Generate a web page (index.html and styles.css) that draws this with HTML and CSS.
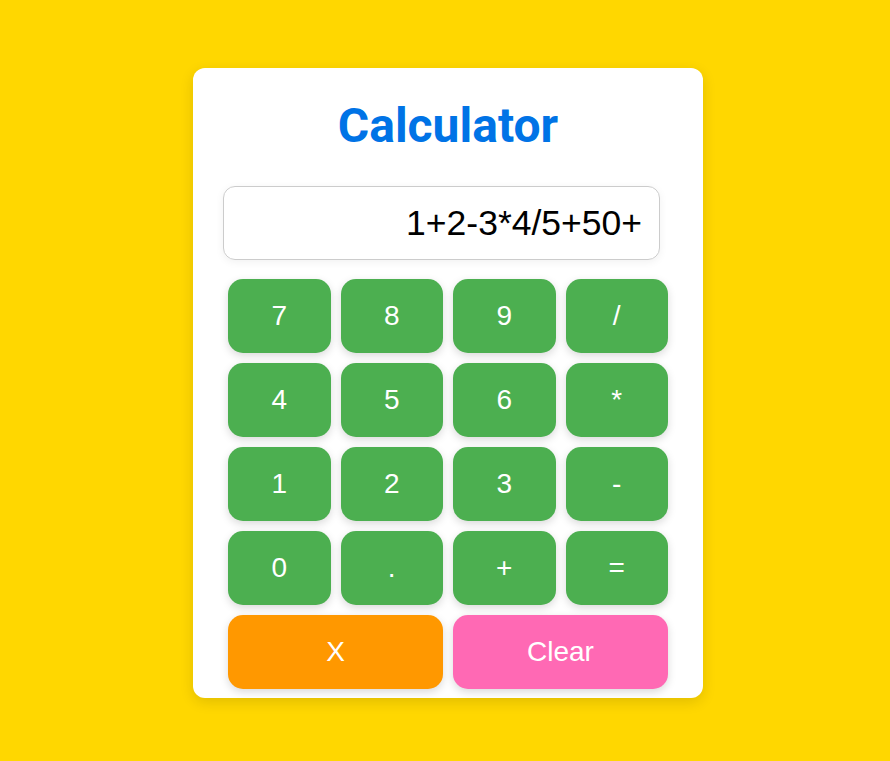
FILE: index.html
```html
<!DOCTYPE html>
<html>
<head>
<meta charset="utf-8">
<link rel="stylesheet" href="styles.css">
</head>
<body>
<div class="calculator">
  <h1 class="title">Calculator</h1>
  <div class="display">1+2-3*4/5+50+</div>
  <div class="keys">
    <button class="key">7</button>
    <button class="key">8</button>
    <button class="key">9</button>
    <button class="key">/</button>
    <button class="key">4</button>
    <button class="key">5</button>
    <button class="key">6</button>
    <button class="key">*</button>
    <button class="key">1</button>
    <button class="key">2</button>
    <button class="key">3</button>
    <button class="key">-</button>
    <button class="key">0</button>
    <button class="key">.</button>
    <button class="key">+</button>
    <button class="key">=</button>
    <button class="key key-back">X</button>
    <button class="key key-clear">Clear</button>
  </div>
</div>
</body>
</html>
```
FILE: styles.css
```css
html, body {
  margin: 0;
  padding: 0;
}
body {
  background: #ffd700;
  min-height: 761px;
  display: flex;
  justify-content: center;
  align-items: flex-start;
  padding-left: 6px;
  box-sizing: border-box;
  font-family: "Liberation Sans", Arial, sans-serif;
}
.calculator {
  margin-top: 68px;
  width: 510px;
  box-sizing: border-box;
  background: #fff;
  border-radius: 12px;
  padding: 30px 30px 4px 30px;
  box-shadow: 0 4px 14px rgba(0, 0, 0, 0.12);
}
.title {
  margin: 0 0 32px 0;
  text-align: center;
  font-family: Roboto, "Liberation Sans", sans-serif;
  font-weight: 700;
  font-size: 48px;
  line-height: 56px;
  color: #0073e6;
}
.display {
  width: 437px;
  height: 74px;
  box-sizing: border-box;
  border: 1px solid #ccc;
  border-radius: 12px;
  padding: 0 17px;
  display: flex;
  align-items: center;
  justify-content: flex-end;
  font-size: 35.5px;
  color: #000;
  box-shadow: 0 2px 8px rgba(0, 0, 0, 0.06);
  margin-bottom: 14px;
}
.keys {
  display: grid;
  grid-template-columns: repeat(4, 1fr);
}
.key {
  margin: 5px;
  height: 74px;
  border: none;
  border-radius: 15px;
  background: #4caf50;
  color: #fff;
  font-family: "Liberation Sans", Arial, sans-serif;
  font-size: 28px;
  box-shadow: 0 3px 8px rgba(0, 0, 0, 0.15);
  padding: 0;
}
.key-back {
  grid-column: span 2;
  background: #ff9800;
}
.key-clear {
  grid-column: span 2;
  background: #ff69b4;
}
```
